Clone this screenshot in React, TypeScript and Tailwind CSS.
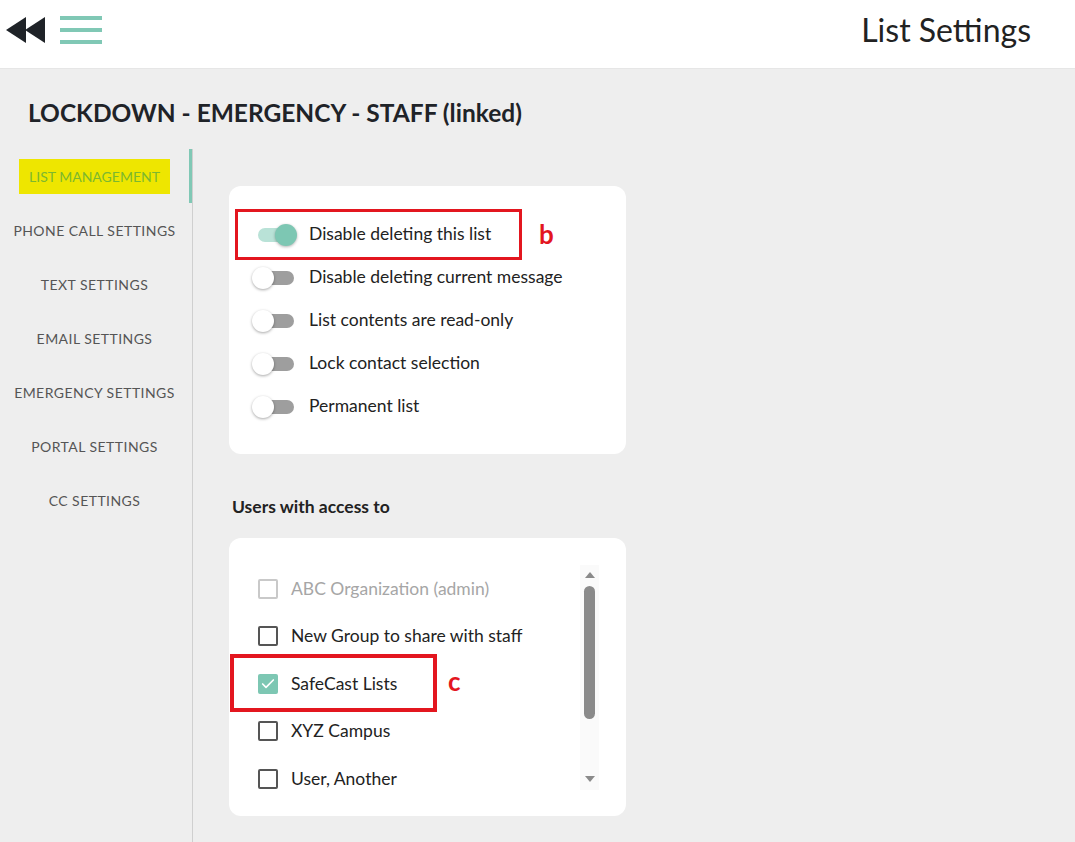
import { Check } from 'lucide-react'

const menu = [
  'LIST MANAGEMENT',
  'PHONE CALL SETTINGS',
  'TEXT SETTINGS',
  'EMAIL SETTINGS',
  'EMERGENCY SETTINGS',
  'PORTAL SETTINGS',
  'CC SETTINGS',
]

const toggles = [
  { label: 'Disable deleting this list', on: true },
  { label: 'Disable deleting current message', on: false },
  { label: 'List contents are read-only', on: false },
  { label: 'Lock contact selection', on: false },
  { label: 'Permanent list', on: false },
]

const users = [
  { name: 'ABC Organization (admin)', checked: false, disabled: true },
  { name: 'New Group to share with staff', checked: false, disabled: false },
  { name: 'SafeCast Lists', checked: true, disabled: false },
  { name: 'XYZ Campus', checked: false, disabled: false },
  { name: 'User, Another', checked: false, disabled: false },
]

function Toggle({ on }: { on: boolean }) {
  return (
    <div className="relative w-[40px] h-[20px] flex items-center shrink-0">
      <div className={`ml-[3px] w-[36px] h-[14px] rounded-full ${on ? 'bg-[#b9e2d7]' : 'bg-[#9e9e9e]'}`} />
      {on ? (
        <div className="absolute right-[-2px] top-0 w-[22px] h-[22px] -mt-[1px] rounded-full bg-[#7dc7b3] shadow-[0_1px_3px_rgba(0,0,0,0.3)]" />
      ) : (
        <div className="absolute left-[-3px] top-0 w-[22px] h-[22px] -mt-[1px] rounded-full bg-white shadow-[0_1px_3px_rgba(0,0,0,0.35)]" />
      )}
    </div>
  )
}

function Checkbox({ checked, disabled }: { checked: boolean; disabled: boolean }) {
  if (checked) {
    return (
      <div className="w-[20px] h-[20px] rounded-[2px] bg-[#7dc7b3] flex items-center justify-center shrink-0">
        <Check size={16} strokeWidth={2.5} color="white" />
      </div>
    )
  }
  return (
    <div
      className={`w-[20px] h-[20px] rounded-[2px] border-2 shrink-0 ${
        disabled ? 'border-[#c9c9c9]' : 'border-[#555]'
      }`}
    />
  )
}

function Rewind() {
  return (
    <svg width="40" height="28" viewBox="0 0 40 28">
      <polygon points="0,14 20,1 20,27" fill="#1f2328" />
      <polygon points="19,14 39,1 39,27" fill="#1f2328" />
    </svg>
  )
}

function Hamburger() {
  return (
    <div className="flex flex-col gap-[8px] w-[42px]">
      <div className="h-[4px] bg-[#80c8b5]" />
      <div className="h-[4px] bg-[#80c8b5]" />
      <div className="h-[4px] bg-[#80c8b5]" />
    </div>
  )
}

export default function App() {
  return (
    <div className="min-h-screen flex flex-col bg-[#eeeeee] font-['Source_Sans_Pro','Lato',sans-serif] text-[#222]">
      <header className="h-[69px] bg-white border-b border-[#e6e6e6] flex items-center pl-[6px] pr-[44px] shrink-0">
        <div className="flex items-center gap-[14px] -mt-[8px]">
          <Rewind />
          <Hamburger />
        </div>
        <h1 className="ml-auto text-[32px] leading-[40px] -mt-[8px] text-[#222]">List Settings</h1>
      </header>

      <h2 className="pl-[28px] pt-[28px] text-[24.5px] leading-[32px] font-bold text-[#1f2328]">
        LOCKDOWN - EMERGENCY - STAFF (linked)
      </h2>

      <div className="flex flex-1 mt-[20px]">
        <nav className="w-[193px] border-r border-[#cfcfcf] shrink-0">
          {menu.map((item, i) => (
            <div
              key={item}
              className={`h-[54px] flex items-center justify-center border-r-[3px] ${
                i === 0 ? 'border-[#80c8b5]' : 'border-transparent'
              }`}
            >
              {i === 0 ? (
                <span className="bg-[#eee600] px-[10px] py-[7px] text-[14px] tracking-[0px] text-[#7cb82f]">
                  {item}
                </span>
              ) : (
                <span className="text-[14px] tracking-[0.45px] text-[#555]">{item}</span>
              )}
            </div>
          ))}
        </nav>

        <main className="pl-[36px] pt-[37px] pb-[26px]">
          <section className="w-[397px] bg-white rounded-[12px] pt-[27px] pb-[26px] pl-[26px]">
            {toggles.map((t, i) => (
              <div key={t.label} className="relative h-[43px] flex items-center gap-[14px]">
                <Toggle on={t.on} />
                <span className="text-[17.5px] text-[#222]">{t.label}</span>
                {i === 0 && (
                  <>
                    <div className="absolute left-[-20px] top-[-4px] w-[287px] h-[51px] border-[3px] border-[#e3161f]" />
                    <span className="absolute left-[284px] top-[6px] text-[26px] leading-[30px] font-bold text-[#e3161f]">
                      b
                    </span>
                  </>
                )}
              </div>
            ))}
          </section>

          <h3 className="mt-[41px] pl-[3px] text-[17.5px] leading-[24px] font-bold text-[#222]">Users with access to</h3>

          <section className="mt-[19px] w-[397px] bg-white rounded-[12px] pt-[27px] pb-[26px] pr-[27px]">
            <div className="h-[225px] flex">
              <div className="flex-1 overflow-hidden pl-[29px]">
                {users.map((u, i) => (
                  <div key={u.name} className="relative h-[47.5px] flex items-center gap-[13px]">
                    <Checkbox checked={u.checked} disabled={u.disabled} />
                    <span className={`text-[17.5px] ${u.disabled ? 'text-[#a6a6a6]' : 'text-[#222]'}`}>{u.name}</span>
                    {i === 2 && (
                      <>
                        <div className="absolute left-[-28px] top-[-6px] w-[207px] h-[58px] border-[4px] border-[#e3161f]" />
                        <span className="absolute left-[190px] top-[6px] text-[26px] leading-[30px] font-bold text-[#e3161f]">
                          c
                        </span>
                      </>
                    )}
                  </div>
                ))}
              </div>
              <div className="w-[19px] bg-[#fafafa] flex flex-col items-center">
                <svg width="10" height="6" viewBox="0 0 10 6" className="mt-[7px]">
                  <polygon points="5,0 10,6 0,6" fill="#8a8a8a" />
                </svg>
                <div className="mt-[8px] w-[11px] h-[133px] rounded-full bg-[#8a8a8a]" />
                <svg width="10" height="6" viewBox="0 0 10 6" className="mt-auto mb-[8px]">
                  <polygon points="0,0 10,0 5,6" fill="#8a8a8a" />
                </svg>
              </div>
            </div>
          </section>
        </main>
      </div>
    </div>
  )
}
